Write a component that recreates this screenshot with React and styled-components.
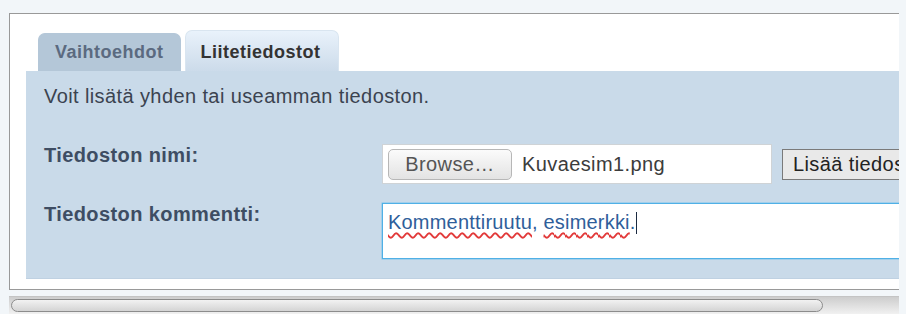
import styled, { createGlobalStyle } from 'styled-components';

const GlobalStyle = createGlobalStyle`
  body {
    margin: 0;
    background: #f2f6f9;
    font-family: 'Liberation Sans', Arial, sans-serif;
    letter-spacing: 0.4px;
  }
`;

function App() {
  return (
    <Page>
      <GlobalStyle />
      <Viewport>
        <Frame>
          <TabBar>
            <Tab type="button">Vaihtoehdot</Tab>
            <Tab type="button" $active>
              Liitetiedostot
            </Tab>
          </TabBar>
          <Panel>
            <Intro>Voit lisätä yhden tai useamman tiedoston.</Intro>
            <FormGrid>
              <Label>Tiedoston nimi:</Label>
              <FileRow>
                <FileBox>
                  <BrowseButton type="button">Browse…</BrowseButton>
                  <FileName>Kuvaesim1.png</FileName>
                </FileBox>
                <AddButton type="button">Lisää tiedosto</AddButton>
              </FileRow>
              <Label>Tiedoston kommentti:</Label>
              <CommentBox>
                <Misspelled>Kommenttiruutu</Misspelled>, <Misspelled>esimerkki</Misspelled>.<Caret />
              </CommentBox>
            </FormGrid>
          </Panel>
        </Frame>
      </Viewport>
      <ScrollTrack>
        <ScrollThumb />
      </ScrollTrack>
    </Page>
  );
}

const Page = styled.div`
  padding: 13px 0 0 9px;
`;

const Viewport = styled.div`
  width: 890px;
  overflow: hidden;
`;

const Frame = styled.div`
  width: 1000px;
  background: #fff;
  border: 1px solid #999;
  border-right: none;
  padding: 16px 0 10px 16px;
`;

const TabBar = styled.div`
  display: flex;
  align-items: flex-end;
  gap: 4px;
  padding-left: 12px;
`;

const Tab = styled.button`
  font-family: inherit;
  letter-spacing: 0.5px;
  font-size: 18px;
  font-weight: bold;
  cursor: pointer;
  border-radius: 7px 7px 0 0;
  height: ${(p) => (p.$active ? '41px' : '38px')};
  padding: ${(p) => (p.$active ? '2px 17px 0 15px' : '0 16px 0 16px')};
  color: ${(p) => (p.$active ? '#333' : '#5b6a80')};
  background: ${(p) =>
    p.$active ? 'linear-gradient(#e9f2fb, #ccdbea)' : '#b4c7d8'};
  border: 1px solid ${(p) => (p.$active ? '#d9e5f0' : '#b4c7d8')};
  border-bottom: none;
`;

const Panel = styled.div`
  background: #c9dae9;
  border-bottom: 1px solid #bfd1e2;
  padding: 14px 18px 19px;
`;

const Intro = styled.p`
  margin: 0;
  font-size: 20px;
  line-height: 23px;
  color: #3b4350;
`;

const FormGrid = styled.div`
  display: grid;
  grid-template-columns: 338px 1fr;
  row-gap: 19px;
  margin-top: 36px;
`;

const Label = styled.div`
  font-size: 20px;
  font-weight: bold;
  line-height: 23px;
  color: #3e4d63;
`;

const FileRow = styled.div`
  display: flex;
  align-items: center;
  gap: 10px;
`;

const FileBox = styled.div`
  box-sizing: border-box;
  width: 390px;
  height: 40px;
  display: flex;
  align-items: center;
  gap: 10px;
  padding: 0 5px;
  background: #fff;
  border: 1px solid #cfd3d6;
`;

const BrowseButton = styled.button`
  font-family: inherit;
  letter-spacing: 0.4px;
  box-sizing: border-box;
  width: 124px;
  height: 31px;
  padding: 0;
  font-size: 20px;
  color: #555;
  background: linear-gradient(#fbfbfb, #e3e3e3);
  border: 1px solid #b7b7b7;
  border-radius: 5px;
`;

const FileName = styled.span`
  font-size: 20px;
  color: #3c3c3c;
`;

const AddButton = styled.button`
  font-family: inherit;
  letter-spacing: 0.4px;
  box-sizing: border-box;
  height: 31px;
  padding: 0 10px;
  font-size: 20px;
  color: #222;
  background: #e9e9e9;
  border: 1px solid #7a7a7a;
  white-space: nowrap;
`;

const CommentBox = styled.div`
  box-sizing: border-box;
  height: 56px;
  padding: 7px 5px;
  font-size: 20px;
  line-height: 23px;
  letter-spacing: 0.2px;
  color: #2f5e9a;
  background: #fff;
  border: 1px solid #4fb0e6;
  box-shadow: 0 0 0 0.5px #7cc4ee;
`;

const Misspelled = styled.span`
  text-decoration: underline wavy #e23a3a;
  text-decoration-thickness: 1.5px;
  text-underline-offset: 3px;
`;

const Caret = styled.span`
  display: inline-block;
  width: 0;
  height: 22px;
  vertical-align: -5px;
  border-left: 1px solid #1b2a40;
`;

const ScrollTrack = styled.div`
  box-sizing: border-box;
  width: 890px;
  height: 18px;
  margin-top: 6px;
  padding: 2px 0 0 2px;
  background: linear-gradient(#cdcdcd, #f1f1f1);
  border-top: 1px solid #c4c4c4;
`;

const ScrollThumb = styled.div`
  box-sizing: border-box;
  width: 812px;
  height: 13px;
  border-radius: 7px;
  border: 1px solid #8c8c8c;
  background: linear-gradient(#f2f2f2, #d4d4d4);
`;

export default App;
